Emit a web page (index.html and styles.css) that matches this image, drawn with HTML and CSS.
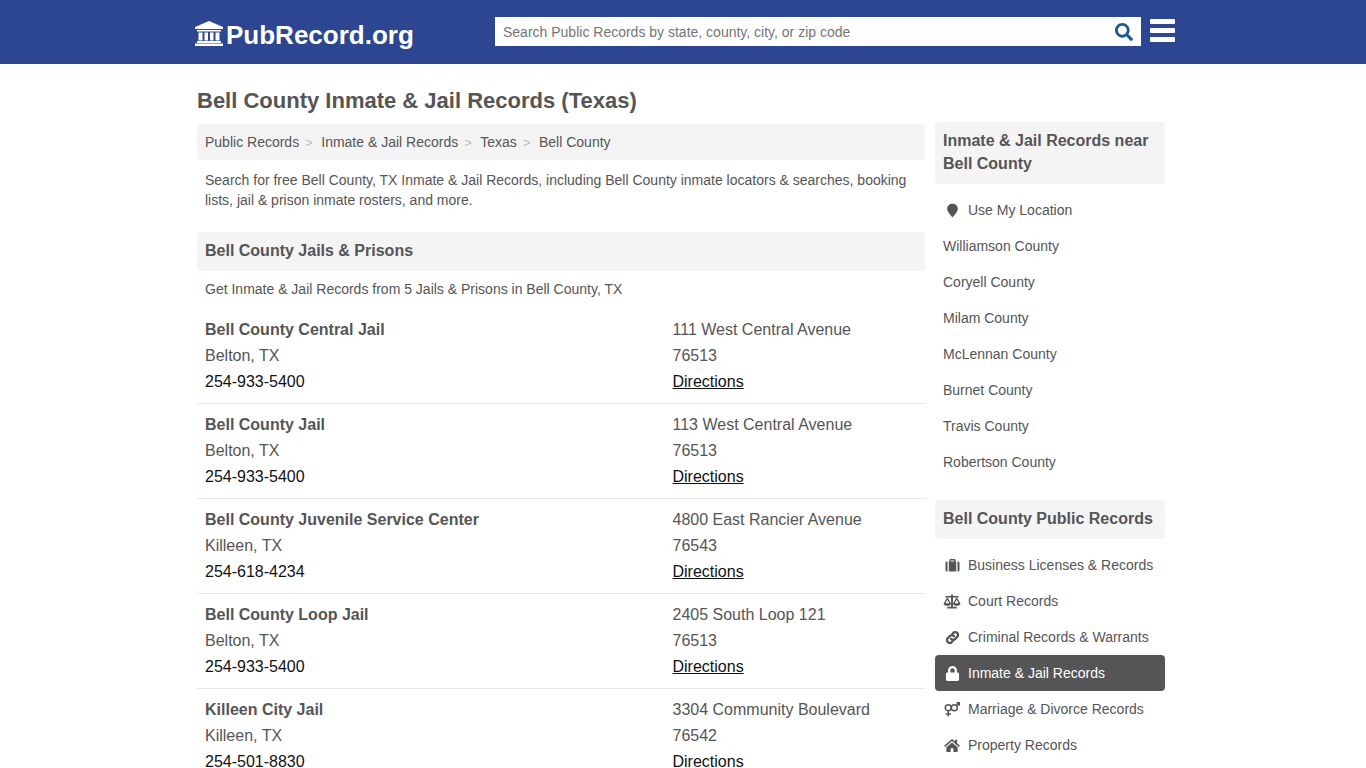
FILE: index.html
```html
<!DOCTYPE html>
<html lang="en">
<head>
<meta charset="utf-8">
<title>Bell County Inmate &amp; Jail Records (Texas)</title>
<link rel="stylesheet" href="styles.css">
</head>
<body>
<div class="page">
<header class="topbar">
  <div class="topbar-inner">
    <a class="logo" href="#">
      <svg class="logo-icon" viewBox="0 0 28 25"><path d="M14 0 28 6v2H0V6z"/><path d="M2 9h24v1.500H2zM3.500 11.500h4v8h-4zM9.500 11.500h3.500v8H9.500zM15 11.500h3.500v8H15zM20.500 11.500h4v8h-4zM2 20h24v2H2zM0 22.500h28V25H0z"/></svg>
      <span>PubRecord.org</span>
    </a>
    <div class="search">
      <span class="search-text">Search Public Records by state, county, city, or zip code</span>
      <svg class="search-icon" viewBox="0 0 512 512"><path d="M505 442.700 405.300 343c-4.500-4.500-10.600-7-17-7H372c27.600-35.300 44-79.700 44-128C416 93.100 322.900 0 208 0S0 93.100 0 208s93.100 208 208 208c48.300 0 92.700-16.400 128-44v16.300c0 6.400 2.500 12.500 7 17l99.700 99.700c9.400 9.400 24.600 9.400 33.900 0l28.300-28.300c9.400-9.400 9.400-24.600.1-34zM208 336c-70.700 0-128-57.200-128-128 0-70.700 57.200-128 128-128 70.700 0 128 57.200 128 128 0 70.700-57.200 128-128 128z"/></svg>
    </div>
    <div class="burger"><i></i><i></i><i></i></div>
  </div>
</header>
<div class="container">
  <h1>Bell County Inmate &amp; Jail Records (Texas)</h1>
  <div class="columns">
    <main class="main">
      <nav class="crumbs">
        <a href="#">Public Records</a><span class="sep">&gt;</span>
        <a href="#">Inmate &amp; Jail Records</a><span class="sep">&gt;</span>
        <a href="#">Texas</a><span class="sep">&gt;</span>
        <a href="#">Bell County</a>
      </nav>
      <p class="intro">Search for free Bell County, TX Inmate &amp; Jail Records, including Bell County inmate locators &amp; searches, booking lists, jail &amp; prison inmate rosters, and more.</p>
      <h2 class="section-title">Bell County Jails &amp; Prisons</h2>
      <p class="sub">Get Inmate &amp; Jail Records from 5 Jails &amp; Prisons in Bell County, TX</p>
      <div class="listing">
        <div class="col-a"><b>Bell County Central Jail</b><span>Belton, TX</span><span class="phone">254-933-5400</span></div>
        <div class="col-b"><span>111 West Central Avenue</span><span>76513</span><a href="#">Directions</a></div>
      </div>
      <div class="listing">
        <div class="col-a"><b>Bell County Jail</b><span>Belton, TX</span><span class="phone">254-933-5400</span></div>
        <div class="col-b"><span>113 West Central Avenue</span><span>76513</span><a href="#">Directions</a></div>
      </div>
      <div class="listing">
        <div class="col-a"><b>Bell County Juvenile Service Center</b><span>Killeen, TX</span><span class="phone">254-618-4234</span></div>
        <div class="col-b"><span>4800 East Rancier Avenue</span><span>76543</span><a href="#">Directions</a></div>
      </div>
      <div class="listing">
        <div class="col-a"><b>Bell County Loop Jail</b><span>Belton, TX</span><span class="phone">254-933-5400</span></div>
        <div class="col-b"><span>2405 South Loop 121</span><span>76513</span><a href="#">Directions</a></div>
      </div>
      <div class="listing">
        <div class="col-a"><b>Killeen City Jail</b><span>Killeen, TX</span><span class="phone">254-501-8830</span></div>
        <div class="col-b"><span>3304 Community Boulevard</span><span>76542</span><a href="#">Directions</a></div>
      </div>
    </main>
    <aside class="side">
      <h3 class="side-title">Inmate &amp; Jail Records near Bell County</h3>
      <ul class="side-list">
        <li><a href="#"><svg class="ico" viewBox="0 0 16 16"><path d="M8 .8c3.100 0 5.700 2.200 5.700 5.300C13.700 9.300 10 12.800 8 15.500 6 12.800 2.300 9.300 2.300 6.100 2.300 3 4.900.8 8 .8z"/></svg>Use My Location</a></li>
        <li><a href="#">Williamson County</a></li>
        <li><a href="#">Coryell County</a></li>
        <li><a href="#">Milam County</a></li>
        <li><a href="#">McLennan County</a></li>
        <li><a href="#">Burnet County</a></li>
        <li><a href="#">Travis County</a></li>
        <li><a href="#">Robertson County</a></li>
      </ul>
      <h3 class="side-title second">Bell County Public Records</h3>
      <ul class="side-list">
        <li><a href="#"><svg class="ico" viewBox="0.500 1 15 14"><path d="M5 4V2.500C5 2 5.500 1.500 6 1.500h4c.5 0 1 .5 1 1V4H9.700V3H6.300v1zM1 5.500C1 4.700 1.600 4 2.300 4H3v10h-.7C1.600 14 1 13.300 1 12.500zM4.300 4h7.400v10H4.300zM13 4h.7c.7 0 1.300.7 1.300 1.500v7c0 .8-.6 1.500-1.300 1.500H13z"/></svg>Business Licenses &amp; Records</a></li>
        <li><a href="#"><svg class="ico wide" viewBox="0 0 18 16"><path d="M8 .5h2V2h6v1.700h-6v9.800h4V15.500H4v-2h4V3.700H2V2h6z"/><path fill-rule="evenodd" d="M4 3.500 8 10c0 1.600-1.800 2.500-4 2.500S0 11.600 0 10zM4 6 1.900 9.800h4.200zM14 3.500 18 10c0 1.600-1.800 2.500-4 2.500s-4-.9-4-2.500zM14 6l-2.100 3.800h4.200z"/></svg>Court Records</a></li>
        <li><a href="#"><svg class="ico" viewBox="0 0 16 16"><g fill="none" stroke-width="2.400" stroke-linecap="round"><path d="M6.500 9.500c1.200 1.200 3 1.200 4.100.2L13 7.300c1.200-1.200 1.200-3 0-4.200s-3-1.200-4.200 0L8 4"/><path d="M9.500 6.500c-1.200-1.200-3-1.200-4.100-.2L3 8.700c-1.200 1.200-1.200 3 0 4.200s3 1.200 4.200 0L8 12"/></g></svg>Criminal Records &amp; Warrants</a></li>
        <li class="active"><a href="#"><svg class="ico" viewBox="0 0 448 512"><path d="M400 224h-24v-72C376 68.200 307.800 0 224 0S72 68.200 72 152v72H48c-26.500 0-48 21.500-48 48v192c0 26.500 21.500 48 48 48h352c26.500 0 48-21.500 48-48V272c0-26.500-21.500-48-48-48zm-104 0H152v-72c0-39.700 32.300-72 72-72s72 32.300 72 72v72z"/></svg>Inmate &amp; Jail Records</a></li>
        <li><a href="#"><svg class="ico wide" viewBox="0 0 18 16"><g fill="none" stroke-width="1.600"><circle cx="5" cy="6" r="3.200"/><path d="M5 9.200V15.500M2.200 12.700h5.600"/><circle cx="11.500" cy="6" r="3.200"/><path d="M13.800 3.700 16.800 .9M13.800 .9h3v3"/></g></svg>Marriage &amp; Divorce Records</a></li>
        <li><a href="#"><svg class="ico wide" viewBox="0 0 18 16"><path d="M9 1 .5 8.300l1.200 1.300L9 3.300l7.300 6.300 1.200-1.300-3-2.600V1.800h-2.200v1.900z"/><path d="M9 4.800l-6 5.100v5.100h4.500v-4h3v4H15V9.900z"/></svg>Property Records</a></li>
      </ul>
    </aside>
  </div>
</div>
</div>
</body>
</html>
```
FILE: styles.css
```css
* { box-sizing: border-box; }
html, body { margin: 0; padding: 0; }
body { font-family: "Liberation Sans", Arial, sans-serif; color: #555; background: #fff; }
a { color: inherit; text-decoration: none; }
.page { height: 768px; overflow: hidden; }

.topbar { height: 64px; background: #2d4691; }
.topbar-inner { width: 980px; margin-left: 195px; height: 64px; display: flex; align-items: flex-start; }
.logo { display: flex; align-items: flex-start; width: 300px; color: #fff; font-size: 26px; font-weight: 700; line-height: 30px; padding-top: 20px; }
.logo-icon { width: 28px; height: 25px; fill: #fff; margin-top: 1px; margin-right: 3px; flex: none; }
.search { width: 646px; height: 29px; margin-top: 17px; background: #fff; display: flex; align-items: center; justify-content: space-between; padding: 0 8px 0 8px; }
.search-text { font-size: 14px; color: #757575; }
.search-icon { width: 18px; height: 18px; fill: #1c5a96; }
.burger { margin-left: 9px; margin-top: 19px; width: 25px; display: flex; flex-direction: column; gap: 4px; }
.burger i { display: block; height: 5px; background: #fff; border-radius: 1px; }

.container { width: 968px; margin-left: 197px; }
h1 { margin: 0; padding-top: 24px; height: 58px; font-size: 22px; line-height: 26px; font-weight: 700; color: #555; }
.columns { display: flex; gap: 10px; align-items: flex-start; }
.main { width: 728px; padding-top: 2px; }
.side { width: 230px; }

.crumbs { height: 36px; background: #f4f4f4; border-radius: 4px; padding: 0 8px; display: flex; align-items: center; font-size: 14px; color: #555; }
.sep { color: #bbb; margin: 0 8.500px 0 6px; font-size: 13px; }
.intro { margin: 10px 8px 0; font-size: 14px; line-height: 20px; }
.section-title { margin: 22px 0 0; height: 39px; background: #f4f4f4; border-radius: 4px; padding: 0 8px; font-size: 16px; line-height: 37px; font-weight: 700; color: #555; }
.sub { margin: 8px 8px 0; font-size: 14px; line-height: 20px; }

.listing { display: flex; padding: 8px 8px 8px; border-bottom: 1px solid #e8e8e8; font-size: 16px; line-height: 26px; }
.sub + .listing { padding-top: 18px; }
.listing:last-child { border-bottom: 0; }
.col-a, .col-b { display: flex; flex-direction: column; }
.col-a { width: 467.500px; }
.phone { color: #111; }
.col-b a { color: #111; text-decoration: underline; }

.side-title { margin: 0; background: #f4f4f4; border-radius: 4px; padding: 7px 8px 9px; font-size: 16px; line-height: 23px; font-weight: 700; color: #555; }
.side-title.second { margin-top: 20px; }
.side-list { list-style: none; margin: 8px 0 0; padding: 0; font-size: 14px; }
.side-list li { height: 36px; }
.side-list a { display: flex; align-items: center; height: 36px; padding: 0 8px; border-radius: 4px; }
.side-list li.active a { background: #555; color: #fff; }
.ico { width: 15px; height: 15px; flex: none; margin: 0 8px 0 2px; fill: #555; stroke: #555; stroke-width: 0; }
.ico.wide { width: 18px; margin: 0 7px 0 0; }
.active .ico { fill: #fff; }
```
